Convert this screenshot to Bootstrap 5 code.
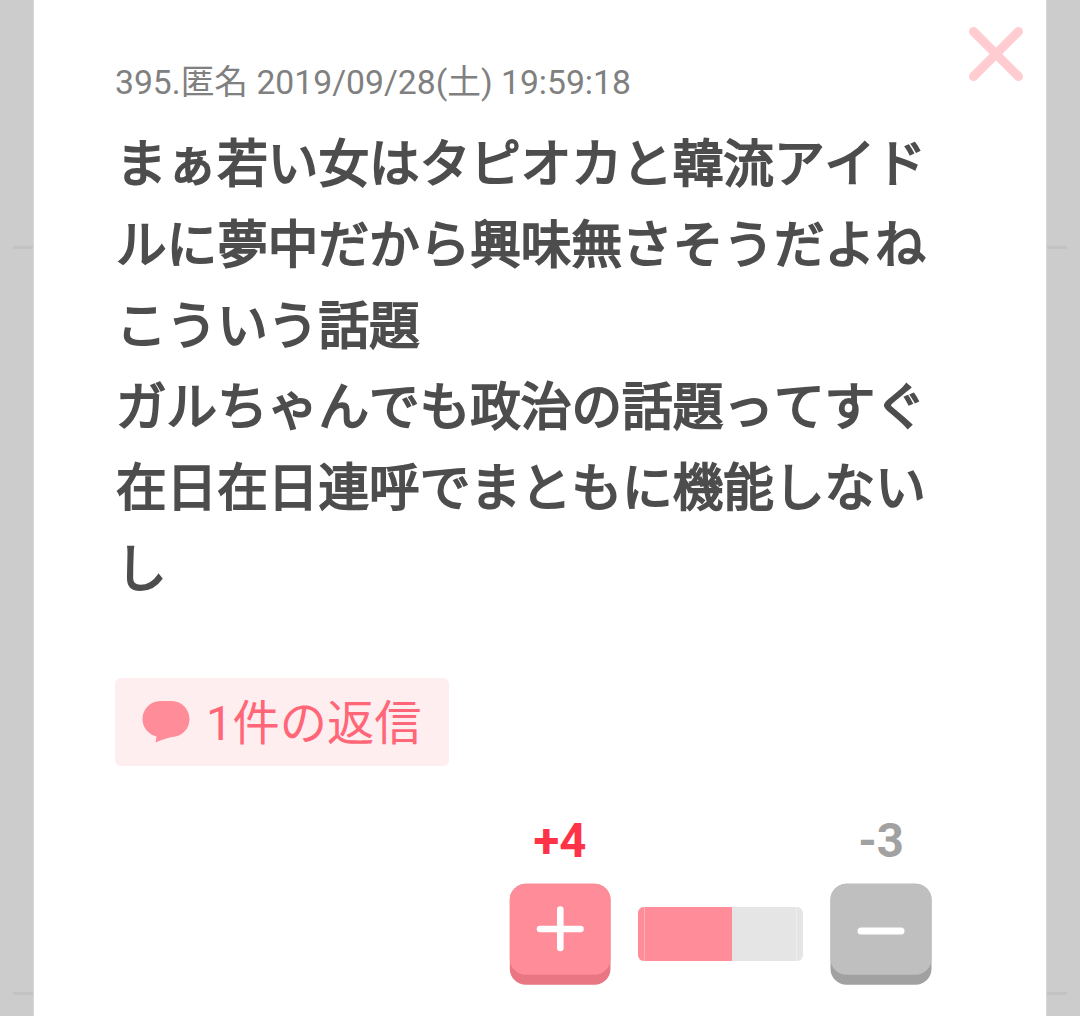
<!DOCTYPE html>
<html lang="ja">
<head>
<meta charset="utf-8">
<meta name="viewport" content="width=device-width, initial-scale=1">
<title>コメント</title>
<link href="https://cdn.jsdelivr.net/npm/bootstrap@5.3.0/dist/css/bootstrap.min.css" rel="stylesheet">
<style>
body{background:#ccc;font-family:Roboto,"Noto Sans CJK JP",sans-serif;font-kerning:none;height:1016px;overflow:hidden}
.page-back{height:1016px;padding:0 13px}
.rule-line{height:3px;background:#c3c3c3}
.rule-a{margin-top:246px}
.rule-b{margin-top:743px}
.popup{left:33px;top:0;width:1014px;height:1016px;border:solid #d9d9d9;border-width:0 1px;padding:62px 114px 0 81px}
.close-x{left:934.500px;top:27px;width:54px;height:54px}
.meta-line{font-size:33.700px;line-height:42px;color:#808080}
.comment-text{font-size:50.625px;line-height:81px;font-weight:400;-webkit-text-stroke:2px #4d4d4d;color:#4d4d4d;margin-top:20px;padding-left:1px}
.reply-btn{width:334px;height:88px;margin-top:68px;padding:0 0 0 27px;border:0;border-radius:6px;background:#ffeef0;color:#ff6677;font-size:47.25px;line-height:88px}
.reply-btn svg{width:48px;height:43px;margin-right:16px}
.reply-btn span{padding-top:3px}
.votes{margin-top:48px}
.vote-col{width:102px}
.vote-num{font-size:47.25px;line-height:54px;font-weight:700}
.num-plus{color:#ff3347}
.num-minus{color:#a1a1a1}
.vote-col svg{width:102px;height:102px;margin-top:15px}
.meter{width:165px;height:54px;margin:93px 27px 0;border-radius:6px;background:#e5e5e5}
.meter .progress-bar{background:#ff8c99}
.meter-end{width:1px;height:54px;background:#fff;opacity:.3;top:0}
.end-l{left:6px}
.end-r{right:6px}
</style>
</head>
<body>
<div class="page-back">
  <div class="d-flex flex-column">
    <div class="rule-line rule-a"></div>
    <div class="rule-line rule-b"></div>
  </div>
</div>
<main class="popup position-absolute bg-white">
  <button class="close-x btn p-0 border-0 position-absolute d-flex" aria-label="閉じる">
    <svg width="54" height="54" viewBox="0 0 54 54" fill="none" stroke="#ffccd1" stroke-width="9" stroke-linecap="round"><path d="M4.500 4.500 49.500 49.500M49.500 4.500 4.500 49.500"/></svg>
  </button>
  <div class="meta-line text-nowrap">395.匿名 2019/09/28(土) 19:59:18</div>
  <p class="comment-text text-nowrap mb-0">まぁ若い女はタピオカと韓流アイド<br>ルに夢中だから興味無さそうだよね<br>こういう話題<br>ガルちゃんでも政治の話題ってすぐ<br>在日在日連呼でまともに機能しない<br>し</p>
  <button class="reply-btn btn d-flex align-items-center text-nowrap">
    <svg viewBox="0 0 48 43" fill="#ff8c99"><path d="M18 0H30C40 0 47.500 8.500 47.500 18C47.500 28 40 35.500 30 36Q24 37 13.500 41.500L14.500 35.500C6 33 .500 26.500 .500 18C.500 8.500 8 0 18 0Z"/></svg>
    <span>1件の返信</span>
  </button>
  <div class="votes d-flex justify-content-end">
    <div class="vote-col d-flex flex-column align-items-center">
      <span class="vote-num num-plus">+4</span>
      <svg viewBox="0 0 102 102"><rect x=".8" y=".8" width="100.700" height="101" rx="16" fill="#e87683"/><rect x=".8" y=".8" width="100.700" height="91" rx="16" fill="#ff8c99"/><path d="M31 46H71.500M51.300 26.500V65" stroke="#fff" stroke-width="6.600" stroke-linecap="round"/></svg>
    </div>
    <div class="meter progress position-relative">
      <div class="progress-bar" style="width:57.1%"></div>
      <div class="meter-end end-l position-absolute"></div>
      <div class="meter-end end-r position-absolute"></div>
    </div>
    <div class="vote-col d-flex flex-column align-items-center">
      <span class="vote-num num-minus">-3</span>
      <svg viewBox="0 0 102 102"><rect x=".5" y=".8" width="101" height="101" rx="16" fill="#a1a1a1"/><rect x=".5" y=".8" width="101" height="91" rx="16" fill="#bfbfbf"/><path d="M31 48H71" stroke="#fff" stroke-width="7" stroke-linecap="round"/></svg>
    </div>
  </div>
</main>
<script src="https://cdn.jsdelivr.net/npm/bootstrap@5.3.0/dist/js/bootstrap.bundle.min.js"></script>
</body>
</html>
